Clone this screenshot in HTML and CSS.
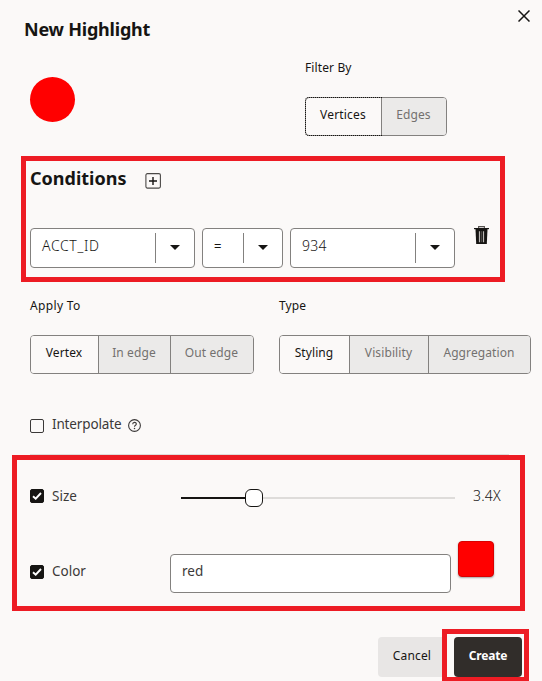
FILE: index.html
```html
<!DOCTYPE html>
<html lang="en">
<head>
<meta charset="utf-8">
<title>New Highlight</title>
<link rel="stylesheet" href="styles.css">
</head>
<body>
<main class="dialog">
  <header class="header">
    <h1 class="title">New Highlight</h1>
    <svg class="close" width="12" height="12" viewBox="0 0 12 12"><path d="M.5.5 11.500 11.500M11.500.5.5 11.500" fill="none" stroke="#161513" stroke-width="1.5"/></svg>
  </header>

  <section class="preview">
    <div class="dot"></div>
    <div class="field">
      <div class="label">Filter By</div>
      <div class="segments filter">
        <span class="seg on focus">Vertices</span><span class="seg">Edges</span>
      </div>
    </div>
  </section>

  <section class="conditions">
    <div class="conditions-head">
      <h2 class="subtitle">Conditions</h2>
      <svg class="add" width="16" height="16" viewBox="0 0 16 16"><rect x=".9" y=".6" width="14.500" height="14.500" rx="1.5" fill="none" stroke="#4b4947" stroke-width="1.1"/><path d="M4 8h8M8 4v8" stroke="#161513" stroke-width="1.4"/></svg>
    </div>
    <div class="condition">
      <div class="select wide"><span class="value acct">ACCT_ID</span><span class="arrow"><svg width="10" height="5" viewBox="0 0 10 5"><path d="M0 0h10L5 5z" fill="#161513"/></svg></span></div>
      <div class="select"><span class="value equals">=</span><span class="arrow"><svg width="10" height="5" viewBox="0 0 10 5"><path d="M0 0h10L5 5z" fill="#161513"/></svg></span></div>
      <div class="select wide"><span class="value number">934</span><span class="arrow"><svg width="10" height="5" viewBox="0 0 10 5"><path d="M0 0h10L5 5z" fill="#161513"/></svg></span></div>
      <svg class="trash" width="15" height="18" viewBox="0 0 15 18"><path d="M4.6 2V.6h5.8V2" fill="none" stroke="#55524f" stroke-width="1.1"/><path d="M0 2h15v1.2H0z" fill="#161513"/><path d="M1.5 3h12l-.7 15H2.200z" fill="#161513"/><path d="M5.500 5.200v11M9.500 5.200v11" stroke="#bbb8b5" stroke-width="1.200"/><path d="M7.500 5.200v11" stroke="#55524f" stroke-width=".8"/></svg>
    </div>
  </section>

  <section class="targets">
    <div class="field">
      <div class="label apply-label">Apply To</div>
      <div class="segments apply"><span class="seg on">Vertex</span><span class="seg">In edge</span><span class="seg">Out edge</span></div>
    </div>
    <div class="field">
      <div class="label">Type</div>
      <div class="segments type"><span class="seg on">Styling</span><span class="seg">Visibility</span><span class="seg">Aggregation</span></div>
    </div>
  </section>

  <section class="interpolate">
    <span class="box"></span>
    <span class="text interp">Interpolate</span>
    <svg class="help" width="13" height="13" viewBox="0 0 13 13"><circle cx="6.5" cy="6.5" r="5.900" fill="none" stroke="#3b3938" stroke-width="1.100"/><path d="M4.700 5.200C4.700 2.800 8.300 2.800 8.300 5c0 1.300-1.800 1.300-1.800 2.700" fill="none" stroke="#3b3938" stroke-width="1.100"/><circle cx="6.500" cy="9.500" r=".75" fill="#3b3938"/></svg>
  </section>

  <section class="styling">
    <div class="row size-row">
      <span class="box checked"><svg width="10" height="8" viewBox="0 0 10 8"><path d="M1 4.200 3.700 6.700 9 1" fill="none" stroke="#fff" stroke-width="1.900"/></svg></span>
      <span class="text size">Size</span>
      <div class="slider"><i class="done"></i><i class="thumb"></i><i class="rest"></i></div>
      <span class="amount">3.4X</span>
    </div>
    <div class="row color-row">
      <span class="box checked"><svg width="10" height="8" viewBox="0 0 10 8"><path d="M1 4.200 3.700 6.700 9 1" fill="none" stroke="#fff" stroke-width="1.900"/></svg></span>
      <span class="text color">Color</span>
      <div class="input"><span>red</span></div>
      <div class="swatch"></div>
    </div>
  </section>

  <footer class="footer">
    <div class="button cancel"><span>Cancel</span></div>
    <div class="button create"><span>Create</span></div>
  </footer>

  <div class="mark mark-conditions"></div>
  <div class="mark mark-styling"></div>
  <div class="mark mark-create"></div>
</main>
</body>
</html>
```
FILE: styles.css
```css
* { box-sizing: border-box; }
body { margin: 0; }
.dialog {
  position: relative;
  width: 542px;
  height: 681px;
  overflow: hidden;
  background: #fbf9f8;
  color: #161513;
  font-family: "Noto Sans", "Open Sans", sans-serif;
  font-size: 12px;
  line-height: 18px;
}
.header { display: flex; justify-content: space-between; height: 77px; padding: 10px 12px 0 24px; }
.title, .subtitle { margin: 0; font-size: 18px; font-weight: 700; line-height: 24px; white-space: nowrap; }
.title { margin-top: 7px; letter-spacing: -.22px; }

.preview { display: flex; height: 79px; padding-left: 30px; }
.dot { width: 45px; height: 45px; margin-right: 230px; border-radius: 50%; background: #f00; }
.preview .field { margin-top: -18px; }
.label { height: 38px; white-space: nowrap; letter-spacing: .12px; }
.apply-label { letter-spacing: .35px; }

.segments { display: grid; height: 39px; border: 1px solid #83817f; border-radius: 4px; }
.seg { display: flex; justify-content: center; padding-right: 1px; background: #ebeae9; color: #73716f; line-height: 34px; white-space: nowrap; letter-spacing: .1px; }
.seg + .seg { border-left: 1px solid #83817f; }
.seg:last-child { border-radius: 0 3px 3px 0; }
.seg.on { background: #fbf9f8; color: #161513; border-radius: 3px 0 0 3px; }
.seg.focus { outline: 1px dotted #161513; outline-offset: 0; letter-spacing: .2px; background: none; }
.filter { width: 142px; grid-template-columns: 75px 1fr; }
.apply { width: 224px; grid-template-columns: 67px 72px 1fr; }
.type { width: 252px; grid-template-columns: 69px 79px 1fr; }

.conditions { height: 141px; padding: 11px 0 0 30px; }
.conditions-head { display: flex; height: 61px; }
.subtitle { width: 115px; margin-top: -1px; }
.add { margin-top: 6px; }
.condition { display: flex; gap: 7px; }
.select { display: grid; grid-template-columns: 1fr 39px; width: 81px; height: 40px; border: 1px solid #83817f; border-radius: 4px; background: #fff; }
.select.wide { width: 165px; }
.value { padding-left: 11px; font-size: 14px; font-weight: 300; line-height: 34px; }
.acct { letter-spacing: .65px; }
.number { letter-spacing: .2px; }
.equals { font-weight: 500; font-size: 13px; }
.arrow { display: flex; align-items: center; height: 30px; margin: 4px 1px 0 0; padding-left: 14px; border-left: 1px solid #83817f; }
.arrow svg { margin-top: -1px; }
.trash { margin: -2px 0 0 12px; }

.targets { display: flex; gap: 25px; height: 121px; padding-left: 30px; }

.interpolate { display: flex; height: 36px; padding-left: 30px; }
.box { flex: none; width: 14px; height: 14px; margin: 0 8px 0 0; border: 1px solid #3b3938; border-radius: 2px; }
.text { font-size: 13.5px; line-height: 20px; margin-top: -4px; color: #3b3938; white-space: nowrap; }
.interp { width: 76px; letter-spacing: -.15px; }
.help { margin-top: 1px; }
.box.checked { display: flex; align-items: center; justify-content: center; background: #161513; border-color: #161513; }

.styling { height: 183px; margin: 0 33px 0 30px; border-top: 1px solid #dedcda; }
.row { display: flex; }
.size-row { height: 86px; padding-top: 34px; }
.size { width: 129px; }
.slider { display: flex; align-items: center; width: 274px; height: 18px; }
.slider i { height: 2px; }
.done { width: 64px; background: #161513; }
.slider .thumb { width: 18px; height: 18px; border: 1px solid #161513; border-radius: 6px; background: #fff; }
.rest { flex: 1; background: #dedcda; }
.amount { margin: -3px 0 0 18px; font-size: 14px; font-weight: 300; line-height: 20px; letter-spacing: .2px; }
.interpolate .box { margin-top: 1px; }
.size-row .box { margin-top: 0; }
.size { margin-top: -3px; }
.color-row .box { margin-top: 24px; }
.color { width: 118px; margin-top: 20px; }
.input { width: 281px; height: 39px; margin-top: 13px; padding-left: 11px; border: 1px solid #83817f; border-radius: 4px; background: #fff; color: #3b3938; font-size: 13.5px; line-height: 33px; }
.swatch { width: 36px; height: 36px; margin-left: 7px; border: 1px solid #d90000; border-radius: 4px; background: #f00; box-shadow: 0 1px 2px rgba(0,0,0,.35); }

.footer { display: flex; gap: 8px; padding-left: 378px; }
.button { width: 68px; height: 40px; border-radius: 4px; text-align: center; line-height: 37px; letter-spacing: .15px; background: #e8e6e5; }
.button.create { background: #312d2a; color: #fff; font-weight: 700; letter-spacing: -.2px; }

.mark { position: absolute; border: 5px solid #ed1c24; }
.mark-conditions { left: 21px; top: 156px; width: 484px; height: 126px; }
.mark-styling { left: 12px; top: 455px; width: 513px; height: 156px; }
.mark-create { left: 442px; top: 629px; width: 87px; height: 53px; }
```
